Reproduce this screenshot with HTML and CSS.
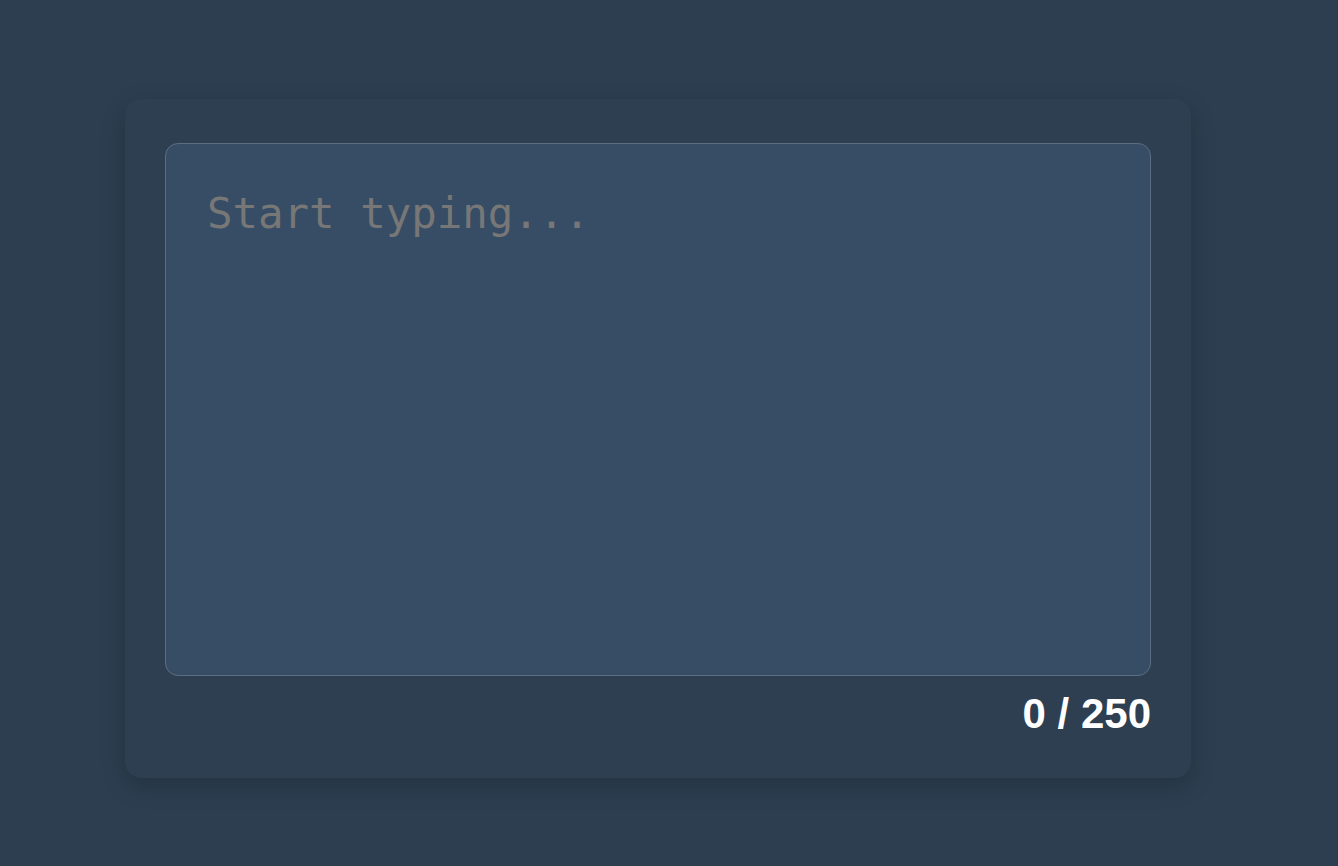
FILE: index.html
```html
<!DOCTYPE html>
<html lang="en">
<head>
<meta charset="utf-8">
<title>Character counter</title>
<link rel="stylesheet" href="styles.css">
</head>
<body>
<main class="card">
  <textarea class="editor" placeholder="Start typing..." maxlength="250"></textarea>
  <div class="counter">0 / 250</div>
</main>
</body>
</html>
```
FILE: styles.css
```css
html, body {
  margin: 0;
  padding: 0;
}
body {
  background: #2c3e50;
  min-height: 866px;
  box-sizing: border-box;
  padding: 99px 0 0 125px;
  font-family: "Liberation Sans", Arial, sans-serif;
}
.card {
  width: 1066px;
  box-sizing: border-box;
  padding: 44px 40px 40px;
  background: #2d3f51;
  border-radius: 16px;
  box-shadow: 0 8px 24px rgba(0, 0, 0, 0.18);
  display: flex;
  flex-direction: column;
}
.editor {
  display: block;
  width: 100%;
  height: 533px;
  box-sizing: border-box;
  margin: 0;
  padding: 45px 40px 40px 41px;
  background: #374d65;
  border: 1px solid #5d6d81;
  border-radius: 13px;
  resize: none;
  outline: none;
  color: #ffffff;
  font-family: "DejaVu Sans Mono", monospace;
  font-size: 42.4px;
}
.editor::placeholder {
  color: #777777;
}
.counter {
  margin-top: 14px;
  text-align: right;
  color: #ffffff;
  font-weight: bold;
  font-size: 42px;
}
```
